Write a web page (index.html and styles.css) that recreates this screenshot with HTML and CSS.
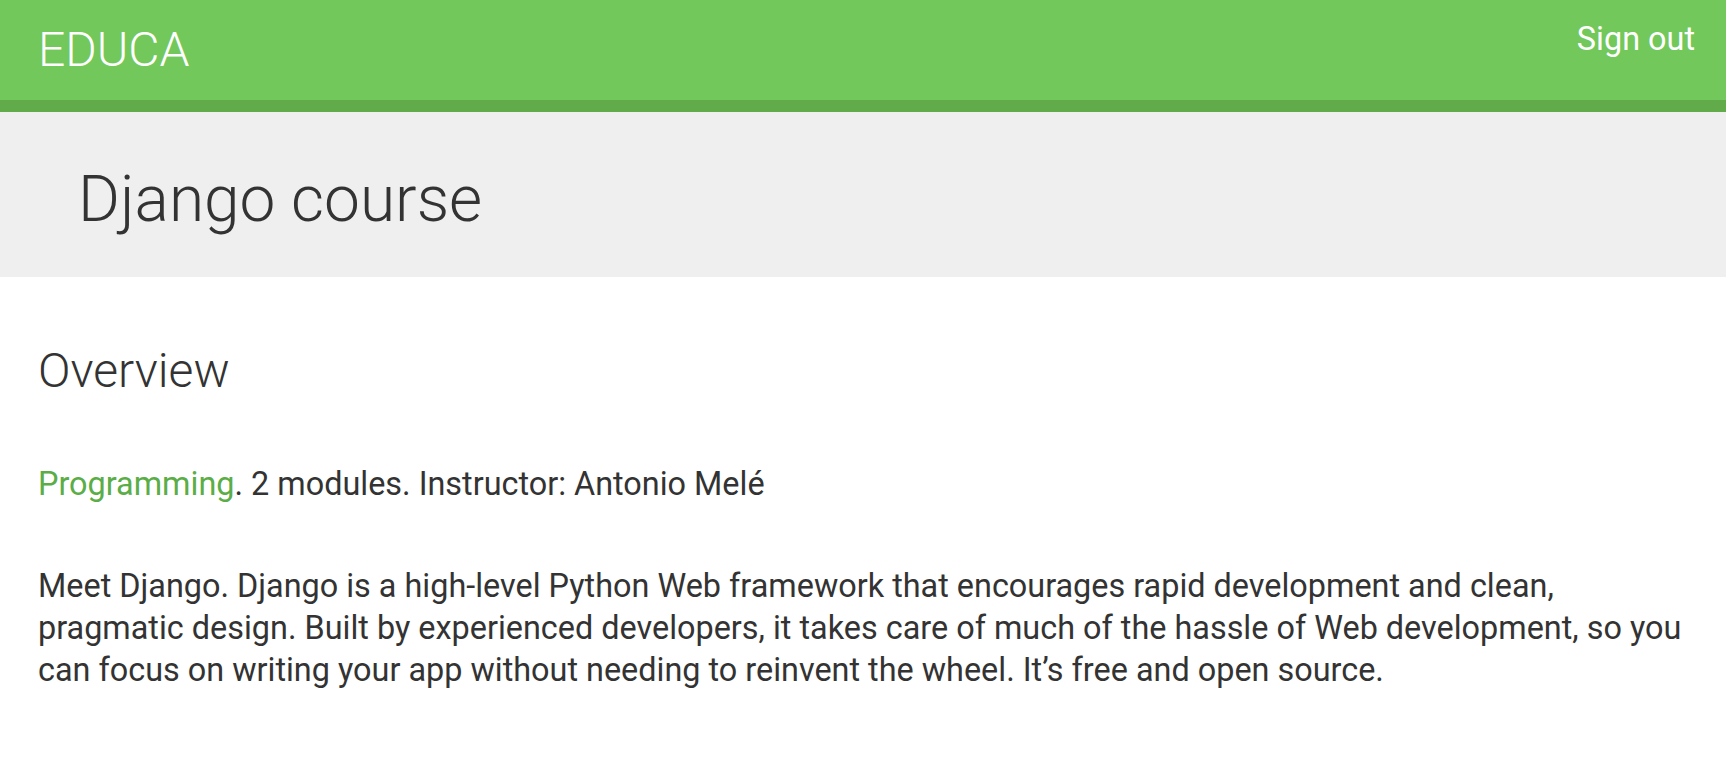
FILE: index.html
```html
<!DOCTYPE html>
<html lang="en">
<head>
<meta charset="utf-8">
<title>Django course</title>
<link rel="stylesheet" href="styles.css">
</head>
<body>
<header class="topbar">
  <span class="logo">EDUCA</span>
  <a class="signout" href="#">Sign out</a>
</header>
<section class="hero">
  <h1 class="hero-title">Django course</h1>
</section>
<main class="content">
  <h2 class="section-title">Overview</h2>
  <p class="meta"><a class="subject" href="#">Programming</a>. 2 modules. Instructor: Antonio Melé</p>
  <p class="overview">Meet Django. Django is a high-level Python Web framework that encourages rapid development and clean, pragmatic design. Built by experienced developers, it takes care of much of the hassle of Web development, so you can focus on writing your app without needing to reinvent the wheel. It’s free and open source.</p>
</main>
</body>
</html>
```

FILE: styles.css
```css
html, body {
  margin: 0;
  padding: 0;
  background: #ffffff;
  font-family: Roboto, "Noto Sans", "Liberation Sans", sans-serif;
  color: #333333;
}

.topbar {
  display: flex;
  justify-content: space-between;
  align-items: flex-start;
  height: 100px;
  padding: 0 31px 0 38px;
  background: #72c85a;
  border-bottom: 12px solid #62ab4b;
}

.logo {
  margin-top: 22px;
  font-size: 48px;
  line-height: 56px;
  font-weight: 300;
  color: #ffffff;
}

.signout {
  margin-top: 20px;
  font-size: 32.4px;
  line-height: 38px;
  font-weight: 400;
  color: #ffffff;
  text-decoration: none;
}

.hero {
  height: 165px;
  box-sizing: border-box;
  padding: 50px 78px 0;
  background: #efefef;
}

.hero-title {
  margin: 0;
  font-size: 64px;
  line-height: 75px;
  font-weight: 300;
  color: #333333;
}

.content {
  padding: 66px 38px 40px;
}

.section-title {
  margin: 0;
  font-size: 48px;
  line-height: 56px;
  font-weight: 300;
  color: #333333;
}

.meta {
  margin: 66px 0 0;
  font-size: 32.4px;
  line-height: 38px;
  font-weight: 400;
}

.subject {
  color: #5aad47;
  text-decoration: none;
}

.overview {
  margin: 62px 0 0;
  font-size: 32.4px;
  line-height: 42px;
  font-weight: 400;
}
```
